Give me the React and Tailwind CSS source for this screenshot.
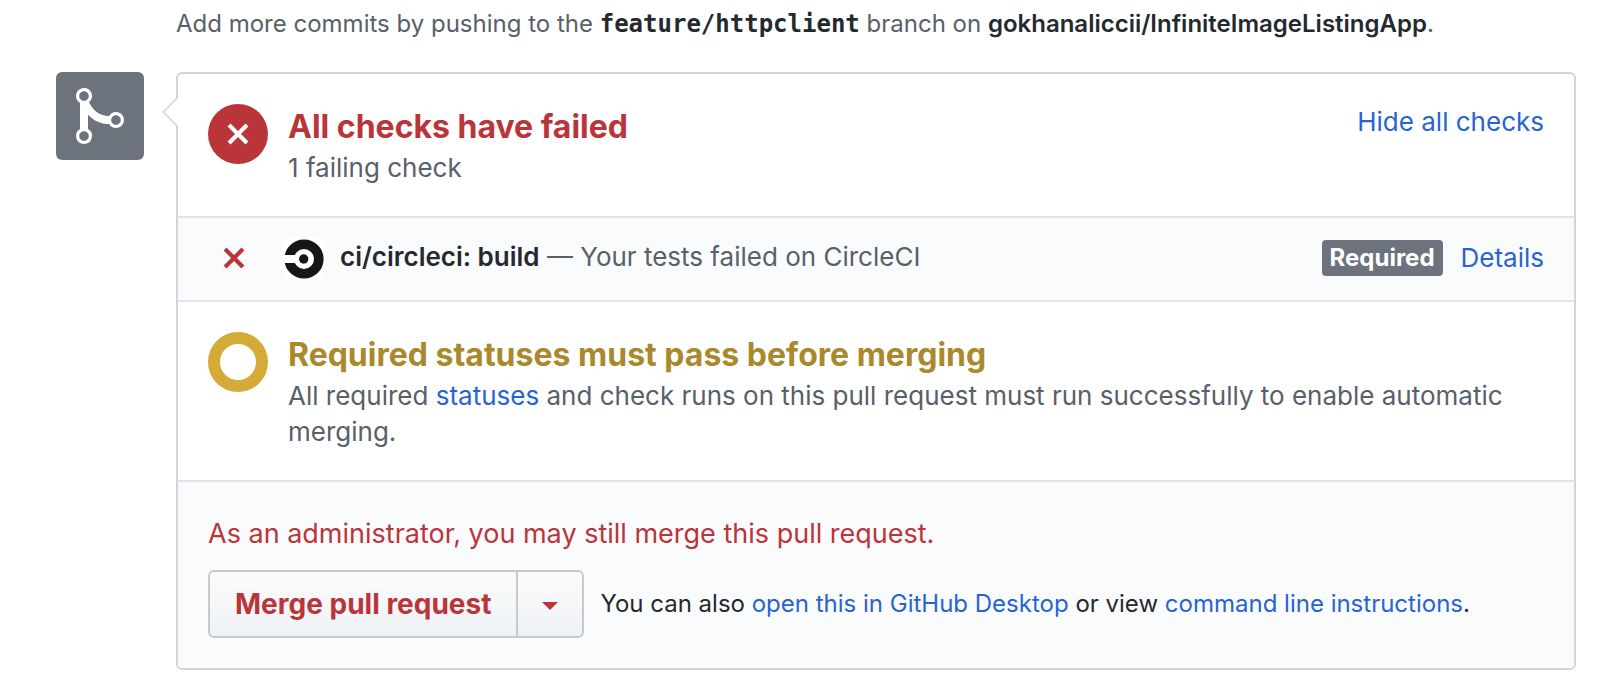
const FAIL_X =
  "M7.48 8l3.75 3.75-1.48 1.48L6 9.48l-3.75 3.75-1.48-1.48L4.52 8 .77 4.25l1.48-1.48L6 6.52l3.75-3.75 1.48 1.48z";

function XIcon() {
  return (
    <svg viewBox="0 0 12 16" className="h-8 w-6 fill-current" aria-hidden="true">
      <path fillRule="evenodd" d={FAIL_X} />
    </svg>
  );
}

function MergeIcon() {
  return (
    <svg viewBox="0 0 12 16" className="h-16 w-12 fill-current" aria-hidden="true">
      <path
        fillRule="evenodd"
        d="M10 7c-.73 0-1.38.41-1.73 1.02V8C7.22 7.98 6 7.64 5.14 6.98c-.75-.58-1.5-1.61-1.89-2.44A1.993 1.993 0 0 0 2 .99C.89.99 0 1.89 0 3a2 2 0 0 0 1 1.72v6.56c-.59.35-1 .99-1 1.72 0 1.11.89 2 2 2a1.993 1.993 0 0 0 1-3.72V7.67c.67.7 1.44 1.27 2.3 1.69.86.42 2.03.63 2.97.64v-.02c.36.61 1 1.02 1.73 1.02 1.11 0 2-.89 2-2 0-1.11-.89-2-2-2zm-6.8 6c0 .66-.55 1.2-1.2 1.2-.65 0-1.2-.55-1.2-1.2 0-.65.55-1.2 1.2-1.2.65 0 1.2.55 1.2 1.2zM2 4.2C1.34 4.2.8 3.65.8 3c0-.65.55-1.2 1.2-1.2.65 0 1.2.55 1.2 1.2 0 .65-.55 1.2-1.2 1.2zm8 6c-.66 0-1.2-.55-1.2-1.2 0-.65.55-1.2 1.2-1.2.65 0 1.2.55 1.2 1.2 0 .65-.55 1.2-1.2 1.2z"
      />
    </svg>
  );
}

function CircleCiLogo() {
  return (
    <svg viewBox="0 0 40 42" className="h-[42px] w-10 shrink-0" aria-hidden="true">
      <rect width="40" height="42" rx="4" fill="#fff" />
      <circle cx="20" cy="22" r="14.8" fill="none" stroke="#161616" strokeWidth="9.6" />
      <rect y="18" width="12" height="8" fill="#fff" />
      <circle cx="19.7" cy="22" r="4.7" fill="#161616" />
    </svg>
  );
}

function Link({ children }) {
  return (
    <a href="#" className="text-[#2764d2] hover:underline">
      {children}
    </a>
  );
}

export default function App() {
  return (
    <main className="bg-white pb-[22px] pl-14 pr-11 font-[Inter,sans-serif] text-[26px] leading-9 text-[#24292e]">
      <p className="mb-[30px] ml-[120px] pt-1.5 text-2xl leading-9 text-[#586069]">
        Add more commits by pushing to the{" "}
        <strong className="font-['DejaVu_Sans_Mono',monospace] font-bold leading-none text-[#24292e]">
          feature/httpclient
        </strong>{" "}
        branch on{" "}
        <strong className="font-semibold text-[#24292e]">
          gokhanaliccii/InfiniteImageListingApp
        </strong>
        .
      </p>

      <div className="flex items-start gap-8">
        <div className="flex size-[88px] shrink-0 items-center justify-center rounded-md bg-[#6c737d] text-white">
          <MergeIcon />
        </div>

        <div className="relative min-w-0 flex-1 rounded-md border-2 border-[#d1d5da]">
          <svg
            viewBox="0 0 16 32"
            className="absolute -left-4 top-[22px] h-8 w-4"
            aria-hidden="true"
          >
            <path d="M16 2L2 16L16 30z" fill="#fff" />
            <path d="M15 2L1.5 16L15 30" fill="none" stroke="#d1d5da" strokeWidth="1.6" />
          </svg>

          <section className="flex items-start gap-5 p-[30px]">
            <div className="flex size-[60px] shrink-0 items-center justify-center rounded-full bg-[#ba3539] text-white">
              <XIcon />
            </div>
            <div className="min-w-0 flex-1 pt-0.5">
              <h2 className="text-[32px] font-bold leading-[42px] text-[#ba3539]">
                All checks have failed
              </h2>
              <p className="mt-0.5 text-[#586069]">1 failing check</p>
            </div>
            <button type="button" className="text-[#2764d2] hover:underline">
              Hide all checks
            </button>
          </section>

          <section className="flex min-h-21 items-center border-t-2 border-[#e1e4e8] bg-[#fafbfd] px-[30px] pb-0.5">
            <span className="ml-3.5 mr-[38px] text-[#ba3539]">
              <XIcon />
            </span>
            <CircleCiLogo />
            <p className="ml-4 min-w-0 flex-1 pb-0.5 text-[#586069]">
              <strong className="font-semibold text-[#24292e]">ci/circleci: build</strong> — Your
              tests failed on CircleCI
            </p>
            <span className="mr-[18px] rounded bg-[#6c737d] px-2 text-2xl leading-9 font-bold text-white">
              Required
            </span>
            <Link>Details</Link>
          </section>

          <section className="flex items-start gap-5 border-t-2 border-[#e1e4e8] p-[30px]">
            <div className="size-[60px] shrink-0 rounded-full border-12 border-[#d4aa38]" />
            <div className="min-w-0 flex-1 pt-0.5">
              <h2 className="text-[32px] font-bold leading-[42px] text-[#aa882c]">
                Required statuses must pass before merging
              </h2>
              <p className="mt-0.5 text-[#586069]">
                All required <Link>statuses</Link> and check runs on this pull request must run
                successfully to enable automatic merging.
              </p>
            </div>
          </section>

          <section className="rounded-b-sm border-t-2 border-[#e1e4e8] bg-[#fafbfd] p-[30px]">
            <p className="mb-3.5 text-[27px] leading-11 text-[#ba3539]">
              As an administrator, you may still merge this pull request.
            </p>
            <div className="flex items-center gap-4">
              <div className="flex h-17 shrink-0 text-[28px] font-bold text-[#ba3539]">
                <button
                  type="button"
                  className="rounded-l-md border-2 border-[#c8cbce] bg-linear-to-b from-[#fafbfc] to-[#eff2f5] px-[25px]"
                >
                  Merge pull request
                </button>
                <button
                  type="button"
                  aria-label="Select merge method"
                  className="flex w-[66px] items-center justify-center rounded-r-md border-2 border-l-0 border-[#c8cbce] bg-linear-to-b from-[#fafbfc] to-[#eff2f5] pt-1"
                >
                  <svg viewBox="0 0 16 8" className="h-2 w-4 fill-current" aria-hidden="true">
                    <path d="M0 0h16L8 8z" />
                  </svg>
                </button>
              </div>
              <p className="text-2xl leading-9">
                You can also <Link>open this in GitHub Desktop</Link> or view{" "}
                <Link>command line instructions</Link>.
              </p>
            </div>
          </section>
        </div>
      </div>
    </main>
  );
}
